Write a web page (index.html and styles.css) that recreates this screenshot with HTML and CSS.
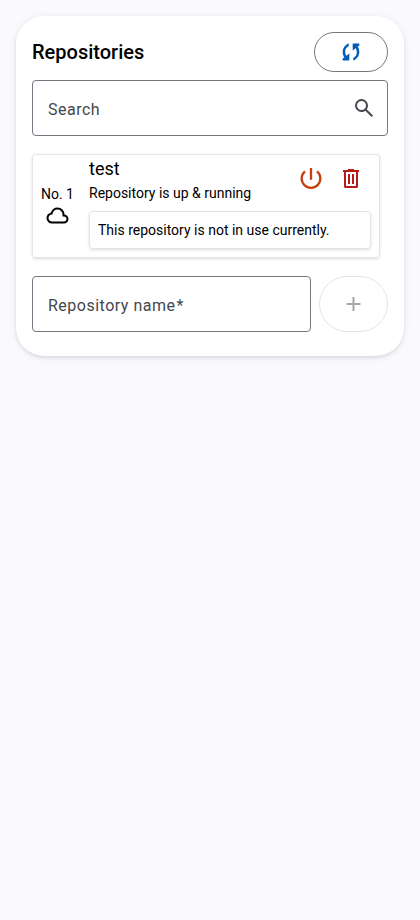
FILE: index.html
```html
<!DOCTYPE html>
<html lang="en">
<head>
<meta charset="utf-8">
<title>Repositories</title>
<link rel="stylesheet" href="styles.css">
</head>
<body>
<main class="card">
  <header class="head">
    <h1>Repositories</h1>
    <button class="pill sync" aria-label="Synchronize"><svg viewBox="0 0 24 24"><path d="M9.800 3.500v2.500C7.500 7 6.200 9 6.200 11.800c0 1.700.4 2.900 1.200 4L10.300 13.500V20.500H3.700v-2.300l1.700-.4C4.300 16.200 3.700 14.200 3.700 12c0-3.900 2.400-7.300 6.100-8.500ZM14.200 20.500v-2.500c2.300-1 3.600-3 3.600-5.800 0-1.700-.4-2.900-1.200-4L13.700 10.500V3.500h6.600v2.300l-1.700.4c1.100 1.600 1.700 3.600 1.700 5.800 0 3.900-2.400 7.300-6.100 8.500Z"/></svg></button>
  </header>
  <div class="field search">
    <span>Search</span>
    <svg viewBox="0 -960 960 960"><path d="M784-120 532-372q-30 24-69 38t-83 14q-109 0-184.5-75.5T120-580q0-109 75.5-184.5T380-840q109 0 184.5 75.5T640-580q0 44-14 83t-38 69l252 252-56 56ZM380-400q75 0 127.5-52.5T560-580q0-75-52.5-127.5T380-760q-75 0-127.5 52.5T200-580q0 75 52.5 127.5T380-400Z"/></svg>
  </div>
  <section class="repo">
    <div class="index">
      <span>No. 1</span>
      <svg viewBox="-20 -980 960 960"><path d="M260-160q-91 0-155.5-63T40-377q0-78 47-139t123-78q25-92 100-149t170-57q117 0 198.5 81.5T760-520q69 8 114.5 59.5T920-340q0 75-52.5 127.5T740-160H260Zm0-80h480q42 0 71-29t29-71q0-42-29-71t-71-29h-60v-80q0-83-58.5-141.5T480-720q-83 0-141.5 58.5T280-520h-20q-58 0-99 41t-41 99q0 58 41 99t99 41Z"/></svg>
    </div>
    <div class="body">
      <div class="top">
        <div>
          <h2>test</h2>
          <p>Repository is up &amp; running</p>
        </div>
        <div class="actions">
          <svg class="power" viewBox="0 -977 960 960"><path d="M440-440v-400h80v400h-80Zm40 320q-74 0-139.5-28.5T226-226q-49-49-77.5-114.5T120-480q0-80 33-151t93-123l56 56q-48 40-75 97t-27 121q0 116 82 198t198 82q117 0 198.5-82T760-480q0-64-26.5-121T658-698l56-56q60 52 93 123t33 151q0 74-28.5 139.5t-77 114.5q-48.5 49-114 77.5T480-120Z"/></svg>
          <svg class="trash" viewBox="0 0 16 19"><path d="M5 0h6v1h5v2h-1v14.500q0 1.500-1.500 1.500h-11Q1 19 1 17.500V3H0V1h5ZM3 3v14h10V3ZM5 5h2v10H5ZM9 5h2v10H9Z"/></svg>
        </div>
      </div>
      <div class="note">This repository is not in use currently.</div>
    </div>
  </section>
  <div class="add-row">
    <div class="field"><span>Repository name<span class="required">*</span></span></div>
    <button class="pill add" aria-label="Add" disabled><svg viewBox="20 -960 960 960"><path d="M440-440H200v-80h240v-240h80v240h240v80H520v240h-80v-240Z"/></svg></button>
  </div>
</main>
</body>
</html>
```
FILE: styles.css
```css
* { box-sizing: border-box; }
body {
  margin: 0;
  padding: 16px;
  background: #faf9fd;
  color: #000;
  font: 14px/20px Roboto, sans-serif;
}
h1, h2, p { margin: 0; font-weight: 400; }
svg { display: block; width: 24px; height: 24px; fill: currentColor; flex: none; }
.card {
  height: 340px;
  padding: 16px;
  border-radius: 28px;
  background: #fff;
  box-shadow: 0 2px 4px -1px rgba(0, 0, 0, .12), 0 1px 8px rgba(0, 0, 0, .07);
}
.head { display: flex; justify-content: space-between; align-items: center; height: 40px; }
.head h1 { font-size: 20px; line-height: 28px; font-weight: 500; }
.pill {
  display: flex;
  align-items: center;
  justify-content: center;
  padding: 0;
  border: 1px solid #74777f;
  border-radius: 28px;
  background: transparent;
}
.sync { width: 74px; height: 40px; padding-bottom: 1px; color: #005cbb; }
.field {
  display: flex;
  align-items: center;
  justify-content: space-between;
  height: 56px;
  padding: 3px 11px 0 15px;
  border: 1px solid #74777f;
  border-radius: 4px;
  color: #44474e;
  font-size: 16px;
  line-height: 24px;
  letter-spacing: .5px;
}
.required { margin-left: 1px; }
.search { margin-top: 8px; }
.search svg { margin-top: -4px; }
.repo {
  display: flex;
  width: 348px;
  height: 104px;
  margin: 18px 0;
  border: 1px solid #e4e4e7;
  border-radius: 4px;
  box-shadow: 0 1px 3px rgba(0, 0, 0, .14);
}
.index {
  display: flex;
  flex-direction: column;
  align-items: center;
  width: 49px;
  padding-top: 29px;
}
.index svg { margin: -1px 1px 0 0; }
.body { width: 290px; padding: 4px 0 0 7px; }
.top { display: flex; justify-content: space-between; height: 52px; }
.top h2 { font-size: 18px; line-height: 20px; }
.top p { margin-top: 4px; }
.actions { display: flex; gap: 18px; padding: 5px 13px 0 0; }
.power { width: 28px; height: 28px; color: #c4400f; }
.trash { width: 16px; height: 19px; margin-top: 5px; color: #ba1a1a; }
.note {
  width: 282px;
  height: 38px;
  padding: 8px;
  border: 1px solid #e4e4e7;
  border-radius: 4px;
  box-shadow: 0 1px 3px rgba(0, 0, 0, .14);
}
.add-row { display: flex; gap: 8px; }
.add-row .field { width: 279px; }
.add { width: 69px; height: 56px; padding-bottom: 1px; color: #a7a7a9; border-color: #e3e3e3; }
```
